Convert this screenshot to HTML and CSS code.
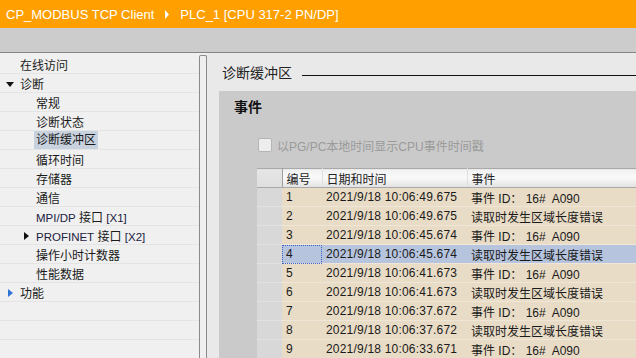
FILE: index.html
```html
<!DOCTYPE html>
<html lang="zh">
<head>
  <meta charset="UTF-8" />
  <title>诊断缓冲区</title>
  <link rel="stylesheet" href="styles.css">
</head>
<body>
  <div class="titlebar">
    <span>CP_MODBUS TCP Client</span>
    <svg class="crumb" width="6" height="9" viewBox="0 0 6 9"><path d="M1 0 L5 4.5 L1 9 Z" fill="#fff"/></svg>
    <span>PLC_1 [CPU 317-2 PN/DP]</span>
  </div>
  <div class="toolbar"></div>

  <div class="main">
    <ul class="tree">
      <li class="lvl0"><span>在线访问</span></li>
      <li class="lvl0"><svg class="tw" width="8" height="5" viewBox="0 0 8 5"><path d="M0 0 H8 L4 5 Z" fill="#111"/></svg><span>诊断</span></li>
      <li class="lvl1"><span>常规</span></li>
      <li class="lvl1"><span>诊断状态</span></li>
      <li class="lvl1"><span class="sel">诊断缓冲区</span></li>
      <li class="lvl1"><span>循环时间</span></li>
      <li class="lvl1"><span>存储器</span></li>
      <li class="lvl1"><span>通信</span></li>
      <li class="lvl1"><span><span class="lat">MPI/DP</span> 接口 <span class="lat">[X1]</span></span></li>
      <li class="lvl1"><svg class="tw sub" width="5" height="8" viewBox="0 0 5 8"><path d="M0 0 L5 4 L0 8 Z" fill="#111"/></svg><span><span class="lat">PROFINET</span> 接口 <span class="lat">[X2]</span></span></li>
      <li class="lvl1"><span>操作小时计数器</span></li>
      <li class="lvl1"><span>性能数据</span></li>
      <li class="lvl0"><svg class="tw fn" width="5" height="8" viewBox="0 0 5 8"><path d="M0 0 L5 4 L0 8 Z" fill="#2f72d6"/></svg><span>功能</span></li>
      <li></li>
      <li></li>
      <li></li>
    </ul>
    <div class="scroll"></div>

    <div class="content">
      <div class="section-title">
        <span>诊断缓冲区</span>
        <div class="rule"></div>
      </div>
      <div class="panel">
        <h2>事件</h2>
        <label class="check"><span class="box"></span>以PG/PC本地时间显示CPU事件时间戳</label>
        <table class="events">
          <colgroup>
            <col class="c-head"><col class="c-num"><col class="c-date"><col class="c-ev">
          </colgroup>
          <thead>
            <tr><th></th><th>编号</th><th>日期和时间</th><th>事件</th></tr>
          </thead>
          <tbody>
            <tr><td class="rh"></td><td>1</td><td>2021/9/18 10:06:49.675</td><td>事件 ID： 16#&nbsp; A090</td></tr>
            <tr><td class="rh"></td><td>2</td><td>2021/9/18 10:06:49.675</td><td>读取时发生区域长度错误</td></tr>
            <tr><td class="rh"></td><td>3</td><td>2021/9/18 10:06:45.674</td><td>事件 ID： 16#&nbsp; A090</td></tr>
            <tr class="active"><td class="rh"></td><td class="focus">4</td><td>2021/9/18 10:06:45.674</td><td>读取时发生区域长度错误</td></tr>
            <tr><td class="rh"></td><td>5</td><td>2021/9/18 10:06:41.673</td><td>事件 ID： 16#&nbsp; A090</td></tr>
            <tr><td class="rh"></td><td>6</td><td>2021/9/18 10:06:41.673</td><td>读取时发生区域长度错误</td></tr>
            <tr><td class="rh"></td><td>7</td><td>2021/9/18 10:06:37.672</td><td>事件 ID： 16#&nbsp; A090</td></tr>
            <tr><td class="rh"></td><td>8</td><td>2021/9/18 10:06:37.672</td><td>读取时发生区域长度错误</td></tr>
            <tr><td class="rh"></td><td>9</td><td>2021/9/18 10:06:33.671</td><td>事件 ID： 16#&nbsp; A090</td></tr>
          </tbody>
        </table>
      </div>
    </div>
  </div>
</body>
</html>
```

FILE: styles.css
```css
html, body {
  margin: 0;
  padding: 0;
  width: 636px;
  height: 358px;
  overflow: hidden;
}

body {
  font-family: "Liberation Sans", "Noto Sans CJK SC", sans-serif;
  font-size: 12px;
  color: #1a1a1a;
  background: #f0f0f0;
}

.titlebar {
  height: 28px;
  background: #ffa000;
  color: #fff;
  font-size: 13px;
  display: flex;
  align-items: center;
  padding-left: 6px;
  white-space: nowrap;
}

.titlebar .crumb {
  margin: 0 10px 0 10px;
}

.toolbar {
  height: 24px;
  background: #cccccc;
  border-bottom: 1px solid #858585;
}

.main {
  display: flex;
  height: 305px;
}

/* navigation tree */
.tree {
  list-style: none;
  margin: 0;
  padding: 2px 0 0 0;
  width: 199px;
  background: #f0f0f0;
}

.tree li {
  height: 19px;
  box-sizing: border-box;
  border-bottom: 1px solid #e4e4e4;
  display: flex;
  align-items: center;
  position: relative;
  white-space: nowrap;
}

.tree .lvl0 { padding-left: 20px; }
.tree .lvl1 { padding-left: 36px; }

.tree .tw {
  position: absolute;
  left: 6px;
  top: 8px;
}

.tree .tw.sub { left: 24px; top: 6px; }
.tree .tw.fn { left: 8px; top: 6px; }

.tree .lat {
  font-size: 11.5px;
  color: #202040;
}

.tree .sel {
  background: #c8d2de;
  padding: 0 2px;
  margin-left: -2px;
  line-height: 18px;
}

.scroll {
  width: 6px;
  margin-top: 2px;
  background: #efefef;
  border: 1px solid #8a8a8a;
  border-bottom: none;
  border-radius: 2px 2px 0 0;
}

/* right side */
.content {
  flex: 1;
  background: #e9e9e9;
  display: flex;
  flex-direction: column;
  min-width: 0;
}

.section-title {
  height: 38px;
  display: flex;
  align-items: center;
  padding-left: 15px;
  font-size: 14px;
  color: #222;
}

.section-title .rule {
  flex: 1;
  height: 1px;
  background: #111;
  margin: 6px 0 0 10px;
}

.panel {
  flex: 1;
  margin-left: 12px;
  background: #cacaca;
  overflow: hidden;
}

.panel h2 {
  margin: 6px 0 0 15px;
  font-size: 14px;
  font-weight: bold;
  color: #111;
  height: 20px;
  line-height: 20px;
}

.check {
  display: flex;
  align-items: center;
  margin: 20px 0 0 39px;
  color: #9a9a9a;
  height: 16px;
}

.check .box {
  width: 12px;
  height: 12px;
  border: 1px solid #b5b5b5;
  border-radius: 2px;
  background: #ededed;
  margin-right: 5px;
}

/* event table */
.events {
  margin: 15px 0 0 38px;
  border-collapse: collapse;
  table-layout: fixed;
  width: 420px;
}

.c-head { width: 25px; }
.c-num { width: 40px; }
.c-date { width: 145px; }
.c-ev { width: 210px; }

.events th {
  height: 19px;
  box-sizing: border-box;
  padding: 0 0 0 4px;
  text-align: left;
  font-weight: normal;
  color: #222;
  background: linear-gradient(#f0f0f0, #fafafa 45%, #e2e2e2);
  border-top: 1px solid #a9a9a9;
  border-bottom: 1px solid #a9a9a9;
  border-right: 1px solid #e0e0e0;
  white-space: nowrap;
}

.events th:first-child {
  background: linear-gradient(#e6e6e6, #dedede);
  border-right: 1px solid #a0a0a0;
}

.events td {
  height: 19px;
  box-sizing: border-box;
  padding: 0 0 0 4px;
  background: #e9dcc6;
  border-bottom: 1px solid #efe6d7;
  white-space: nowrap;
  overflow: hidden;
}

.events td:nth-child(3) {
  letter-spacing: 0.2px;
}

.events td.rh {
  background: #d8d8d8;
  border-bottom: 1px solid #e2e2e2;
}

.events tr.active td {
  background: #b6c4de;
}

.events tr.active td.rh {
  background: #d8d8d8;
}

.events td.focus {
  outline: 1px dotted #3a62c8;
  outline-offset: -1px;
}
```
